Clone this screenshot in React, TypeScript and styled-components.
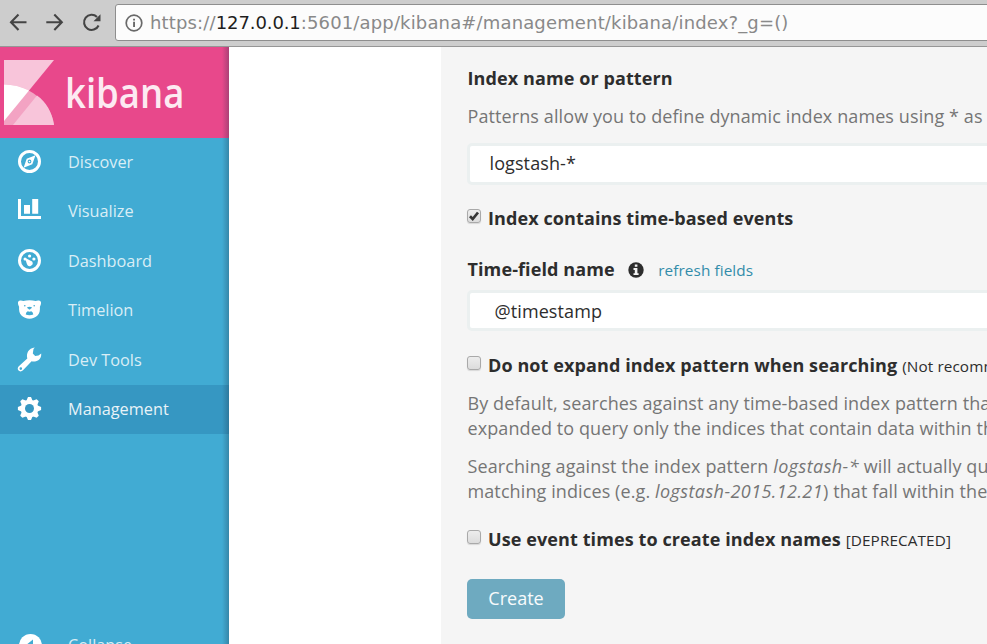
import React from "react";
import styled, { createGlobalStyle } from "styled-components";

const GlobalStyle = createGlobalStyle`
  html, body { margin: 0; overflow: hidden; }
  *, *::before, *::after { box-sizing: border-box; }
`;

const Page = styled.div`
  width: 987px;
  height: 644px;
  overflow: hidden;
  display: flex;
  flex-direction: column;
  background: #fff;
  font-family: "Open Sans", sans-serif;
  font-size: 18px;
  line-height: 25px;
  color: #2d2d2d;
`;

const BrowserBar = styled.header`
  flex: none;
  height: 47px;
  display: flex;
  align-items: flex-start;
  background: #cdcdcd;
  border-bottom: 1px solid #969696;
`;

const NavButtons = styled.div`
  flex: none;
  width: 115px;
  height: 46px;
  svg { display: block; }
`;

const AddressBar = styled.div`
  flex: none;
  width: 900px;
  height: 37px;
  margin-top: 4px;
  padding-left: 9px;
  display: flex;
  align-items: center;
  gap: 7px;
  background: #fcfcfc;
  border: 1px solid #8e8e8e;
  border-radius: 3px;
  svg { flex: none; }
`;

const Url = styled.span`
  font-family: "DejaVu Sans", sans-serif;
  font-size: 18px;
  line-height: 24px;
  letter-spacing: 0.15px;
  color: #898989;
  white-space: nowrap;
`;

const Host = styled.span`
  letter-spacing: -0.1px;
  color: #1e1e1e;
`;

const Body = styled.div`
  flex: 1;
  min-height: 0;
  display: flex;
`;

const Sidebar = styled.nav`
  position: relative;
  flex: none;
  width: 229px;
  overflow: hidden;
  display: flex;
  flex-direction: column;
  background: #41abd3;
  &::after {
    content: "";
    position: absolute;
    inset: 0 0 0 auto;
    width: 7px;
    background: linear-gradient(to right, rgba(30, 50, 70, 0), rgba(30, 50, 70, 0.3));
  }
`;

const Brand = styled.div`
  flex: none;
  height: 91px;
  display: flex;
  background: #e8488b;
  svg { display: block; }
`;

const BrandName = styled.span`
  margin: 12px 0 0 10px;
  height: 66px;
  font-size: 41px;
  font-weight: 600;
  line-height: 66px;
  color: #fdeaf2;
  transform: scaleX(0.89);
  transform-origin: left;
`;

const NavItem = styled.a<{ $active?: boolean; $lift?: number }>`
  flex: none;
  height: 49.375px;
  display: flex;
  align-items: center;
  padding-left: 17px;
  padding-bottom: ${(p) => p.$lift ?? 0}px;
  gap: 26px;
  font-size: 16.3px;
  color: ${(p) => (p.$active ? "#e8f3f8" : "#d9eef6")};
  background: ${(p) => (p.$active ? "#3697c2" : "transparent")};
  svg { flex: none; display: block; margin-bottom: 2px; }
`;

const CollapseItem = styled(NavItem)`
  margin-top: 187px;
  svg { margin-bottom: 0; }
`;

const Panel = styled.main`
  flex: none;
  width: 700px;
  margin-left: 212px;
  padding: 19px 0 0 26px;
  background: #f5f5f5;
  letter-spacing: 0.1px;
  white-space: nowrap;
`;

const Heading = styled.div`
  height: 25px;
  padding-left: 0.5px;
  font-weight: 700;
`;

const Help = styled.p<{ $top: number }>`
  margin: ${(p) => p.$top}px 0 0 0.5px;
  color: #757575;
  em { letter-spacing: 0.42px; }
`;

const Field = styled.div<{ $top: number; $height: number; $padding: string }>`
  margin-top: ${(p) => p.$top}px;
  height: ${(p) => p.$height}px;
  padding: ${(p) => p.$padding};
  display: flex;
  align-items: center;
  background: #fff;
  border: 3px solid #ebf0f0;
  border-radius: 5px;
`;

const CheckRow = styled.label<{ $top: number }>`
  margin-top: ${(p) => p.$top}px;
  height: 25px;
  display: flex;
  align-items: flex-start;
`;

const Checkbox = styled.span`
  flex: none;
  width: 14px;
  height: 14px;
  margin: 3px 7px 0 0;
  border: 1px solid #a9a9a9;
  border-radius: 3px;
  background: linear-gradient(#ededed, #dcdcdc);
  box-shadow: 0 1px 1px rgba(0, 0, 0, 0.12);
  svg { display: block; overflow: visible; }
`;

const Strong = styled.span`
  font-weight: 700;
`;

const Small = styled.small`
  margin-left: 5px;
  font-size: 15.3px;
  line-height: 27px;
`;

const TimeRow = styled.div`
  margin-top: 26px;
  height: 25px;
  padding-left: 0.5px;
  display: flex;
  align-items: center;
  svg { margin: 0 14px 0 13.5px; }
`;

const Link = styled.a`
  font-size: 15.3px;
  line-height: 25px;
  padding-top: 1px;
  color: #328caa;
`;

const CreateButton = styled.button`
  display: block;
  width: 98px;
  height: 40px;
  margin-top: 27px;
  padding: 0 0 2px;
  border: 0;
  border-radius: 5px;
  background: #6eaac0;
  color: #f8fbfc;
  font: inherit;
`;

const CompassIcon = () => (
  <svg width="25" height="25" viewBox="0 0 25 25">
    <circle cx="12.5" cy="12.5" r="10" fill="none" stroke="#fff" strokeWidth="3" />
    <path fill="#fff" fillRule="evenodd" d="M18.5 6.2 15.3 15.2 6.6 18.8 9.7 9.8ZM12.5 10.6a1.9 1.9 0 1 0 0 3.8 1.9 1.9 0 0 0 0-3.8Z" />
    <circle cx="12.5" cy="12.5" r=".8" fill="#fff" />
  </svg>
);

const ChartIcon = () => (
  <svg width="25" height="25" viewBox="0 0 25 25" fill="#fff">
    <path d="M1 1h3v17h20v3H1z" />
    <path d="M7 7h6v8.700H7zM15.200 1h6v14.700h-6z" />
  </svg>
);

const GaugeIcon = () => (
  <svg width="25" height="25" viewBox="0 0 25 25" fill="#fff">
    <circle cx="12.5" cy="12.5" r="10" fill="none" stroke="#fff" strokeWidth="3" />
    <circle cx="8" cy="11" r="1.5" />
    <circle cx="12.6" cy="8" r="1.6" />
    <circle cx="16.9" cy="11" r="1.6" />
    <path d="M7.9 9.7 15.1 13.6A2.9 2.9 0 1 1 10 16.3Z" />
  </svg>
);

const BearIcon = () => (
  <svg width="25" height="25" viewBox="0 0 25 25">
    <path fill="#fff" d="M1 5.200C1.300 3.300 4.400 2.800 6.400 4.100 10 2.800 15 2.800 18.600 4.100c2-1.300 5.100-.8 5.400 1.100.2 1.800-.5 3.200-1.100 4.500.2 3.300-.2 6.800-2.400 8.900-3.700 4.100-12.300 4.100-16 0C2.300 16.500 1.900 13 2.100 9.700 1.500 8.400.8 7 1 5.200Z" />
    <g fill="#41abd3">
      <circle cx="7.800" cy="8.800" r=".8" />
      <circle cx="17.200" cy="8.800" r=".8" />
      <path d="M10 10.200q2.500-1 5 0-.6 1.500-1.800 1.700v.6h-1.400v-.6Q10.600 11.700 10 10.200ZM8.700 17.600q.2-2.400 2-3.300l1.800.5 1.800-.5q1.800.9 2 3.300-3.800 1.500-7.600 0Z" />
    </g>
  </svg>
);

const WrenchIcon = () => (
  <svg width="25" height="25" viewBox="0 0 25 25">
    <path fill="#fff" fillRule="evenodd" d="M17.800 .5 16.500 2 15.800 6.500 18.200 9 21.500 8.600 24.200 6.600C24.500 10.500 22.500 13.500 19 14.300 17.200 14.800 15.500 14.500 14.600 14.300L6 23.300C4.500 24.900 2.300 24.700 1.300 23.300 .4 22.100.6 20.500 1.800 19.300L10.300 11.400C9 6.500 11.500 1 17.800.5ZM3.800 20.300a1.300 1.300 0 1 0 0 2.600 1.300 1.300 0 0 0 0-2.600Z" />
  </svg>
);

const GearIcon = () => (
  <svg width="25" height="25" viewBox="0 0 25 25">
    <g fill="#fff">
      {[0, 45, 90, 135].map((angle) => (
        <path
          key={angle}
          transform={`rotate(${angle} 12.5 12.5)`}
          d="M11 .9h3l1.700 4v15.200l-1.700 4h-3l-1.700-4V4.900z"
        />
      ))}
      <circle cx="12.500" cy="12.500" r="8.700" />
    </g>
    <circle cx="12.500" cy="12.500" r="4.500" fill="#3697c2" />
  </svg>
);

const CollapseIcon = () => (
  <svg width="25" height="25" viewBox="0 0 25 25">
    <circle cx="13.500" cy="12.500" r="11.500" fill="#fff" />
    <path d="M16 6.500v12.500L8.500 12.500Z" fill="#41abd3" />
  </svg>
);

const navItems = [
  { label: "Discover", icon: <CompassIcon /> },
  { label: "Visualize", icon: <ChartIcon />, lift: 1.5 },
  { label: "Dashboard", icon: <GaugeIcon /> },
  { label: "Timelion", icon: <BearIcon /> },
  { label: "Dev Tools", icon: <WrenchIcon /> },
  { label: "Management", icon: <GearIcon />, active: true },
];

export default function App() {
  return (
    <Page>
      <GlobalStyle />
      <BrowserBar>
        <NavButtons>
          <svg width="115" height="46" fill="none" stroke="#444" strokeWidth="2.100">
            <path d="M26.500 22.200H11.500M18.500 14.500 11 22.200l7.500 7.700M46.300 22.200h15M54.300 14.500l7.500 7.700-7.500 7.700" />
            <path d="M98.600 25.500A7.600 7.600 0 1 1 97 16.900" />
            <path d="M100.500 14.200v7h-7z" fill="#444" stroke="none" />
          </svg>
        </NavButtons>
        <AddressBar>
          <svg width="18" height="18" viewBox="0 0 18 18">
            <circle cx="9" cy="9" r="7.800" fill="none" stroke="#696969" strokeWidth="1.700" />
            <path d="M8.100 7.700h1.900v5.300H8.100zM8.100 4.700h1.900v1.800H8.100z" fill="#696969" />
          </svg>
          <Url>
            https://<Host>127.0.0.1</Host>:5601/app/kibana#/management/kibana/index?_g=()
          </Url>
        </AddressBar>
      </BrowserBar>
      <Body>
        <Sidebar>
          <Brand>
            <svg width="55" height="91" viewBox="0 0 55 91">
              <path d="M4 13h50L4 74z" fill="#f8c5da" />
              <path d="M4 37.500C29 37.500 51 55 54 78H4z" fill="#f3a3c3" />
              <path d="M4 37.500C13 37.500 21 39.500 29 43.500L4 74z" fill="#fff" />
              <path d="M37 48.500C46 55 52 65 54 78H13z" fill="#f8c5da" />
            </svg>
            <BrandName>kibana</BrandName>
          </Brand>
          {navItems.map((item) => (
            <NavItem key={item.label} $active={item.active} $lift={item.lift}>
              {item.icon}
              {item.label}
            </NavItem>
          ))}
          <CollapseItem>
            <CollapseIcon />
            Collapse
          </CollapseItem>
        </Sidebar>
        <Panel>
          <Heading>Index name or pattern</Heading>
          <Help $top={13}>Patterns allow you to define dynamic index names using * as a wildcard.</Help>
          <Field $top={14} $height={42} $padding="0 0 1px 19.5px">logstash-*</Field>
          <CheckRow $top={21}>
            <Checkbox>
              <svg width="12" height="12" viewBox="0 0 12 12">
                <path d="M2 6.300 4.700 9 10 2.500" fill="none" stroke="#353535" strokeWidth="2.700" />
              </svg>
            </Checkbox>
            <Strong>Index contains time-based events</Strong>
          </CheckRow>
          <TimeRow>
            <Strong>Time-field name</Strong>
            <svg width="16" height="16" viewBox="0 0 16 16">
              <circle cx="8" cy="8" r="7.700" fill="#2d2d2d" />
              <path d="M6.800 2.500h2.600v2.300H6.800zM5.500 6.100h3.900v5.100h1.200V13H5.500v-1.800h1.300V7.900H5.500z" fill="#f5f5f5" />
            </svg>
            <Link>refresh fields</Link>
          </TimeRow>
          <Field $top={8} $height={41} $padding="2px 0 0 24.5px">@timestamp</Field>
          <CheckRow $top={22}>
            <Checkbox />
            <Strong>Do not expand index pattern when searching</Strong>
            <Small>(Not recommended)</Small>
          </CheckRow>
          <Help $top={13}>
            By default, searches against any time-based index pattern that contains
            <br />
            expanded to query only the indices that contain data within the currently
          </Help>
          <Help $top={13}>
            Searching against the index pattern <em>logstash-*</em> will actually query
            <br />
            matching indices (e.g. <em>logstash-2015.12.21</em>) that fall within the current
          </Help>
          <CheckRow $top={23}>
            <Checkbox />
            <Strong>Use event times to create index names</Strong>
            <Small>[DEPRECATED]</Small>
          </CheckRow>
          <CreateButton>Create</CreateButton>
        </Panel>
      </Body>
    </Page>
  );
}
